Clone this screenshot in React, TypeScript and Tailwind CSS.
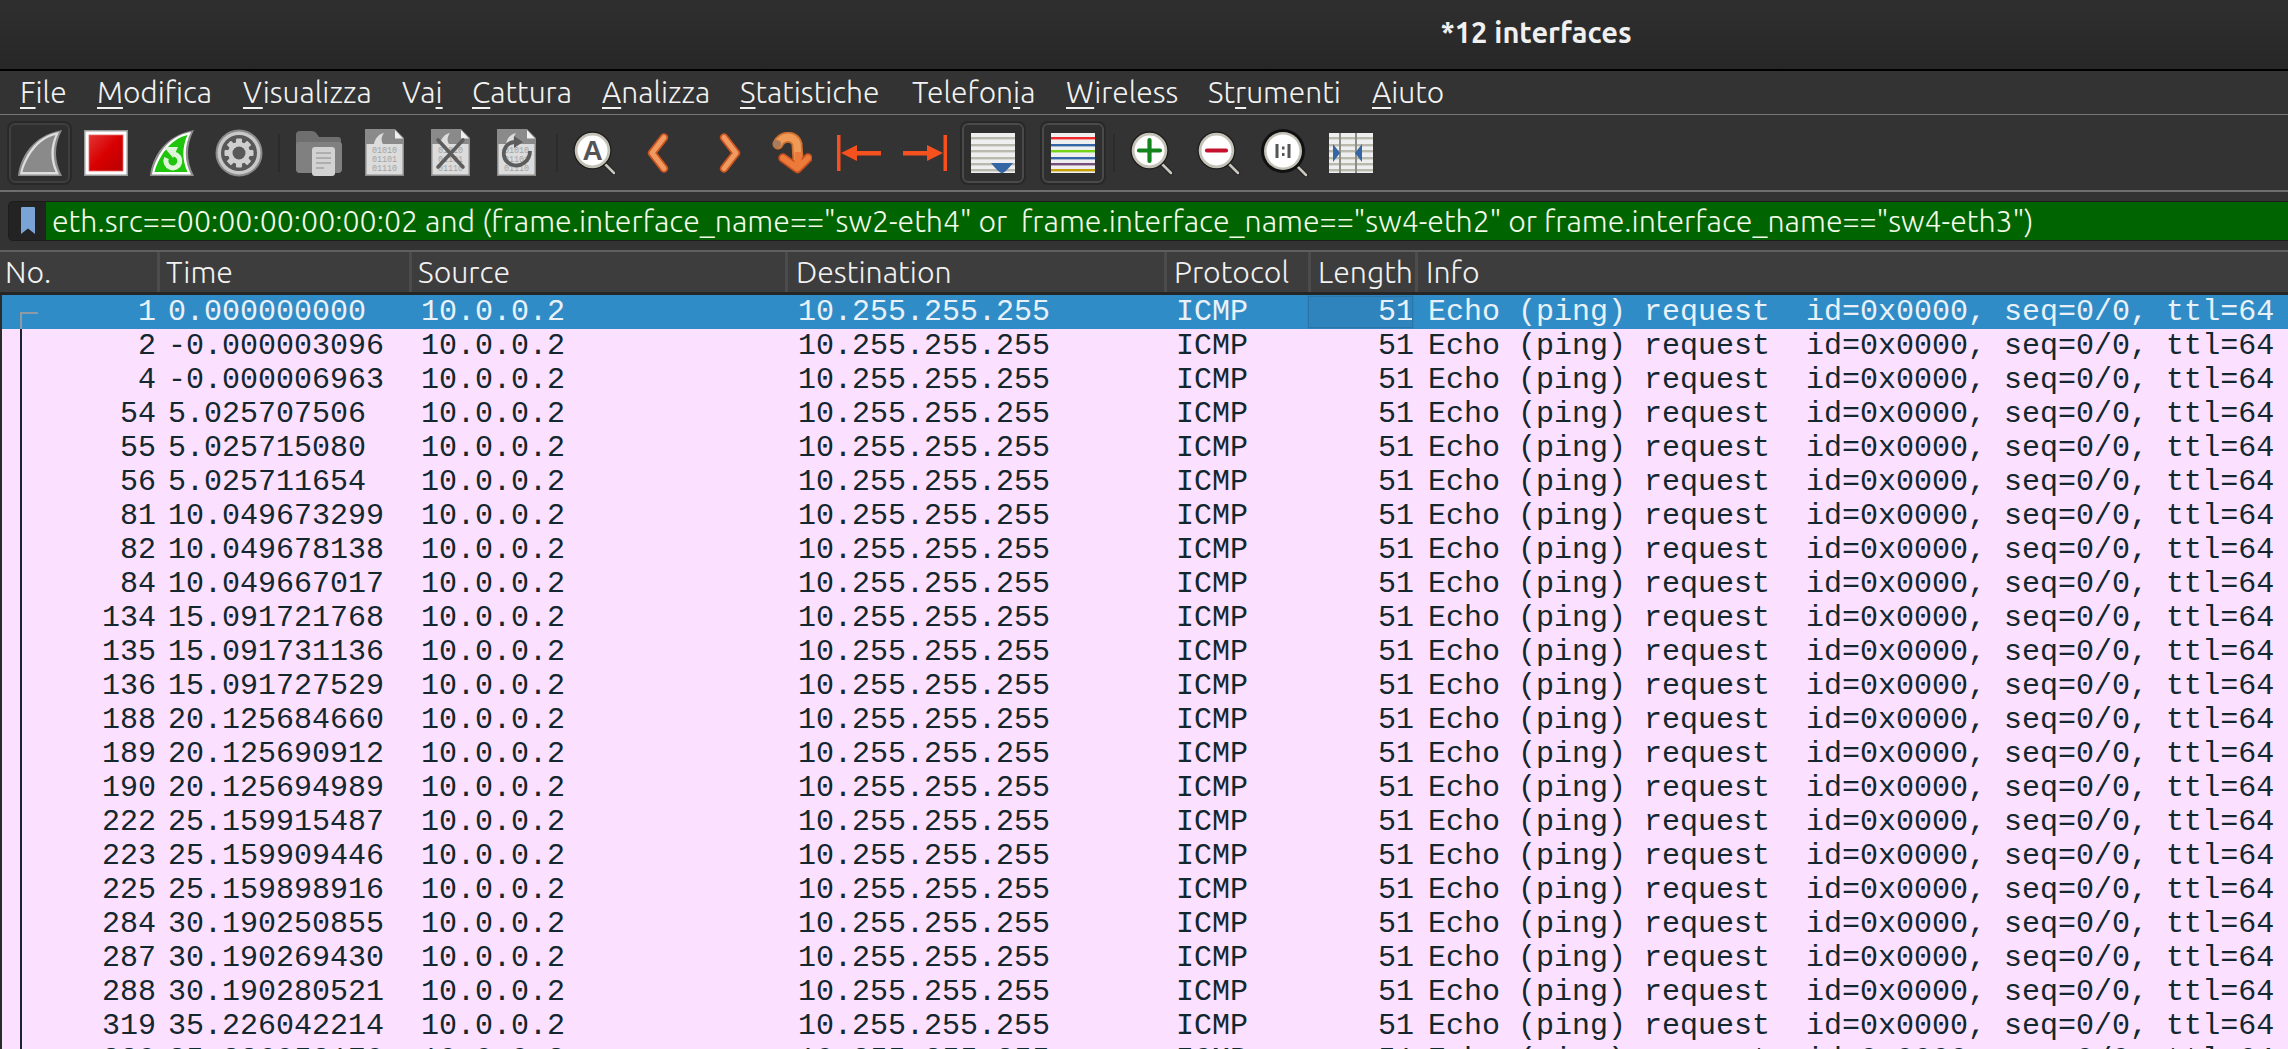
const uiFont = "font-['Ubuntu','Lato','Open_Sans',sans-serif]";

const menuItems = [
  { pre: '', key: 'F', post: 'ile', cls: 'w-[77px]' },
  { pre: '', key: 'M', post: 'odifica', cls: 'w-[146px]' },
  { pre: '', key: 'V', post: 'isualizza', cls: 'w-[159px]' },
  { pre: 'Va', key: 'i', post: '', cls: 'w-[70px]' },
  { pre: '', key: 'C', post: 'attura', cls: 'w-[130px]' },
  { pre: '', key: 'A', post: 'nalizza', cls: 'w-[138px]' },
  { pre: '', key: 'S', post: 'tatistiche', cls: 'w-[172px]' },
  { pre: 'Telefon', key: 'i', post: 'a', cls: 'w-[154px]' },
  { pre: '', key: 'W', post: 'ireless', cls: 'w-[142px]' },
  { pre: 'St', key: 'r', post: 'umenti', cls: 'w-[164px]' },
  { pre: '', key: 'A', post: 'iuto', cls: 'w-[80px]' },
];

const columns = [
  { label: 'No.', cls: 'w-[160px] pl-[5px]' },
  { label: 'Time', cls: 'w-[252px] pl-[6px]' },
  { label: 'Source', cls: 'w-[376px] pl-[6px]' },
  { label: 'Destination', cls: 'w-[379px] pl-[8px]' },
  { label: 'Protocol', cls: 'w-[144px] pl-[7px]' },
  { label: 'Length', cls: 'w-[107px] pl-[7px]' },
  { label: 'Info', cls: 'flex-1 pl-[8px]' },
];

const packets: [string, string][] = [
  ['1', '0.000000000'],
  ['2', '-0.000003096'],
  ['4', '-0.000006963'],
  ['54', '5.025707506'],
  ['55', '5.025715080'],
  ['56', '5.025711654'],
  ['81', '10.049673299'],
  ['82', '10.049678138'],
  ['84', '10.049667017'],
  ['134', '15.091721768'],
  ['135', '15.091731136'],
  ['136', '15.091727529'],
  ['188', '20.125684660'],
  ['189', '20.125690912'],
  ['190', '20.125694989'],
  ['222', '25.159915487'],
  ['223', '25.159909446'],
  ['225', '25.159898916'],
  ['284', '30.190250855'],
  ['287', '30.190269430'],
  ['288', '30.190280521'],
  ['319', '35.226042214'],
  ['320', '35.226052170'],
];

function Sep() {
  return <div className="h-[38px] w-[2px] shrink-0 bg-[#2b2b2b]" />;
}

function SharkIcon() {
  return (
    <svg viewBox="0 0 46 48" className="h-[48px] w-[46px]">
      <path d="M1 47 C3 28 16 6 45 1 C37 16 37 32 45 47 Z" fill="#8e8e8e" />
      <path d="M3 45.5 C6 29 18 7 42 3 C35 17 35 32 42 45.5 Z" fill="#dedede" />
      <path d="M5.5 43 C9 30 20 10 38.5 6 C33 18 33 31 38.5 43 Z" fill="#8a8a8a" />
    </svg>
  );
}

function StopIcon() {
  return (
    <svg viewBox="0 0 44 46" className="h-[46px] w-[44px]">
      <defs>
        <linearGradient id="stopg" x1="0" y1="0" x2="1" y2="1">
          <stop offset="0" stopColor="#e23434" />
          <stop offset="0.5" stopColor="#d80000" />
          <stop offset="1" stopColor="#b80000" />
        </linearGradient>
      </defs>
      <rect width="44" height="46" fill="#9a9a9a" />
      <rect x="1.5" y="1.5" width="41" height="43" fill="#ffffff" />
      <rect x="5" y="5" width="34" height="36" fill="url(#stopg)" stroke="#e56a6a" strokeWidth="0.8" />
    </svg>
  );
}

function RestartIcon() {
  return (
    <svg viewBox="0 0 46 48" className="h-[48px] w-[46px]">
      <path d="M1 47 C3 28 16 6 45 1 C37 16 37 32 45 47 Z" fill="#8e8e8e" />
      <path d="M3 45.5 C6 29 18 7 42 3 C35 17 35 32 42 45.5 Z" fill="#ffffff" />
      <path d="M5.5 43 C9 30 20 10 38.5 6 C33 18 33 31 38.5 43 Z" fill="#1fc50c" />
      <path d="M17.5 29 A7 7 0 1 0 25 25" fill="none" stroke="#dff5da" strokeWidth="5" />
      <path d="M15 18 L29 18 L24 29 Z" fill="#dff5da" />
    </svg>
  );
}

function GearIcon() {
  const teeth = [0, 45, 90, 135, 180, 225, 270, 315];
  return (
    <svg viewBox="0 0 48 48" className="h-[48px] w-[48px]">
      <circle cx="24" cy="24" r="23.5" fill="#8a8a8a" />
      <circle cx="24" cy="24" r="21.5" fill="#c8c8c8" />
      <circle cx="24" cy="24" r="18" fill="#585858" />
      {teeth.map((a) => (
        <rect key={a} x="21" y="9.5" width="6" height="7" rx="1" fill="#cfcfcf" transform={`rotate(${a} 24 24)`} />
      ))}
      <circle cx="24" cy="24" r="11" fill="#cfcfcf" />
      <circle cx="24" cy="24" r="6.5" fill="#585858" />
    </svg>
  );
}

function FolderIcon() {
  return (
    <svg viewBox="0 0 46 46" className="h-[46px] w-[46px]">
      <path d="M0 5 Q0 1 4 1 H16 Q19 1 21 4 L23 7 H42 Q45 7 45 10 V38 Q45 43 40 43 H5 Q0 43 0 38 Z" fill="#6f6f6f" />
      <path d="M0 15 Q0 12 3 12 H43 Q46 12 46 15 V39 Q46 43 42 43 H4 Q0 43 0 39 Z" fill="#808080" />
      <rect x="16" y="17" width="23" height="29" rx="3" fill="#d2d2d2" />
      <path d="M20 23 H35 M20 28 H35 M20 33 H35 M20 38 H28" stroke="#a2a2a2" strokeWidth="1.6" />
    </svg>
  );
}

function FileBase() {
  return (
    <>
      <path d="M0 0 H30 L39 9 V47 H0 Z" fill="#8a8a8a" />
      <path d="M1.5 15 H37.5 V45.5 H1.5 Z" fill="#dcdcdc" />
      <path d="M30 1 L38 9.5 H30 Z" fill="#f0f0f0" />
      <path d="M9 15 C10 9 14 5 19 4 C16 8 16 12 18 15 Z" fill="#dcdcdc" />
      <g fill="#a4a4a4" fontFamily="'Liberation Mono', monospace" fontSize="8.4">
        <text x="7" y="24">01010</text>
        <text x="7" y="33">01101</text>
        <text x="7" y="42">01110</text>
      </g>
    </>
  );
}

function FileIcon() {
  return (
    <svg viewBox="0 0 39 47" className="h-[47px] w-[39px]">
      <FileBase />
    </svg>
  );
}

function CloseFileIcon() {
  return (
    <svg viewBox="0 0 39 47" className="h-[47px] w-[39px]">
      <FileBase />
      <path d="M7 11 L32 38 M32 11 L7 38" stroke="#5c5c5c" strokeWidth="3.6" strokeLinecap="round" />
    </svg>
  );
}

function ReloadFileIcon() {
  return (
    <svg viewBox="0 0 39 47" className="h-[47px] w-[39px]">
      <FileBase />
      <path d="M17 13 C9 14 6 21 7 27 C9 36 20 39 27 34 C31 31 33 27 33 22" fill="none" stroke="#5c5c5c" strokeWidth="3.8" />
      <path d="M17 7 L26 13 L17 19 Z" fill="#5c5c5c" />
    </svg>
  );
}

function Lens({ children }: { children: React.ReactNode }) {
  return (
    <svg viewBox="0 0 44 44" className="h-[44px] w-[44px]">
      <path d="M30 31 L41 42" stroke="#1c1c1c" strokeWidth="4.5" strokeLinecap="round" />
      <path d="M30 31 L41 42" stroke="#c9c7bc" strokeWidth="2.6" strokeLinecap="round" />
      <circle cx="19.5" cy="19.5" r="19" fill="#1a1a1a" />
      <circle cx="19.5" cy="19.5" r="17.8" fill="#c4c2b6" />
      <circle cx="19.5" cy="19.5" r="15" fill="#ffffff" />
      {children}
    </svg>
  );
}

function FindIcon() {
  return (
    <Lens>
      <text x="19.5" y="29" textAnchor="middle" fontFamily="'Liberation Sans', sans-serif" fontWeight="700" fontSize="28" fill="#555555">
        A
      </text>
    </Lens>
  );
}

function ZoomInIcon() {
  return (
    <Lens>
      <path d="M19.5 9 V30 M9 19.5 H30" stroke="#13841e" strokeWidth="4.2" strokeLinecap="round" />
    </Lens>
  );
}

function ZoomOutIcon() {
  return (
    <Lens>
      <path d="M10 19.5 H29" stroke="#c4122e" strokeWidth="4.2" strokeLinecap="round" />
    </Lens>
  );
}

function ZoomResetIcon() {
  return (
    <svg viewBox="0 0 48 48" className="h-[48px] w-[48px]">
      <path d="M33 34 L45 46" stroke="#1c1c1c" strokeWidth="4.5" strokeLinecap="round" />
      <path d="M33 34 L45 46" stroke="#c9c7bc" strokeWidth="2.6" strokeLinecap="round" />
      <circle cx="22" cy="22" r="22" fill="#111111" />
      <circle cx="22" cy="22" r="19" fill="#c4c2b6" />
      <circle cx="22" cy="22" r="16.5" fill="#ffffff" />
      <path d="M14.5 15 H17.5 V29 H14.5 Z M26.5 15 H29.5 V29 H26.5 Z M21 17.5 H23.5 V20.5 H21 Z M21 24 H23.5 V27 H21 Z" fill="#555555" />
    </svg>
  );
}

function BackIcon() {
  return (
    <svg viewBox="0 0 22 40" className="h-[40px] w-[22px]">
      <path d="M17 4.5 L5 20 L17 35.5" fill="none" stroke="#cc5420" strokeWidth="8.5" strokeLinecap="round" strokeLinejoin="round" />
      <path d="M17 4.5 L5 20 L17 35.5" fill="none" stroke="#f09a60" strokeWidth="5" strokeLinecap="round" strokeLinejoin="round" />
    </svg>
  );
}

function ForwardIcon() {
  return (
    <svg viewBox="0 0 22 40" className="h-[40px] w-[22px]">
      <path d="M5 4.5 L17 20 L5 35.5" fill="none" stroke="#cc5420" strokeWidth="8.5" strokeLinecap="round" strokeLinejoin="round" />
      <path d="M5 4.5 L17 20 L5 35.5" fill="none" stroke="#f09a60" strokeWidth="5" strokeLinecap="round" strokeLinejoin="round" />
    </svg>
  );
}

function JumpIcon() {
  return (
    <svg viewBox="0 0 40 42" className="h-[42px] w-[40px]">
      <path d="M6 12 C9 4 22 2 25 12 L26 28" fill="none" stroke="#d0702e" strokeWidth="11" strokeLinecap="round" />
      <path d="M6 12 C9 4 22 2 25 12 L26 28" fill="none" stroke="#f09a58" strokeWidth="7.5" strokeLinecap="round" />
      <circle cx="5" cy="12" r="4" fill="#a87c5c" />
      <path d="M11 26 L25.5 36.5 L36 26" fill="none" stroke="#c9501c" strokeWidth="9.5" strokeLinecap="round" strokeLinejoin="round" />
      <path d="M11 26 L25.5 36.5 L36 26" fill="none" stroke="#ec7a3a" strokeWidth="6" strokeLinecap="round" strokeLinejoin="round" />
      <path d="M26 20 L26 33" stroke="#ec7a3a" strokeWidth="7" />
    </svg>
  );
}

function FirstIcon() {
  return (
    <svg viewBox="0 0 44 36" className="h-[36px] w-[44px]">
      <rect x="0" y="0" width="3.5" height="36" fill="#f4511e" />
      <path d="M4 18 L20 10 V26 Z" fill="#f4511e" />
      <rect x="18" y="16" width="26" height="4.5" fill="#f4511e" />
    </svg>
  );
}

function LastIcon() {
  return (
    <svg viewBox="0 0 44 36" className="h-[36px] w-[44px]">
      <rect x="40.5" y="0" width="3.5" height="36" fill="#f4511e" />
      <path d="M40 18 L24 10 V26 Z" fill="#f4511e" />
      <rect x="0" y="16" width="26" height="4.5" fill="#f4511e" />
    </svg>
  );
}

function AutoScrollIcon() {
  return (
    <svg viewBox="0 0 44 40" className="h-[40px] w-[44px]">
      <rect width="44" height="40" fill="#efefef" />
      {[4, 11, 17, 24, 30, 36].map((y) => (
        <rect key={y} y={y} width="44" height="2.4" fill="#b9b9ae" />
      ))}
      <path d="M20 30 H42 Q34 40 31 40 Q28 40 20 30 Z" fill="#3465a4" />
    </svg>
  );
}

function ColorizeIcon() {
  return (
    <svg viewBox="0 0 44 40" className="h-[40px] w-[44px]">
      <rect width="44" height="40" fill="#efefef" />
      <rect y="4" width="44" height="2.4" fill="#ef2929" />
      <rect y="11" width="44" height="2.4" fill="#3465a4" />
      <rect y="17" width="44" height="2.4" fill="#73d216" />
      <rect y="24" width="44" height="2.4" fill="#3465a4" />
      <rect y="30" width="44" height="2.4" fill="#75507b" />
      <rect y="36" width="44" height="2.4" fill="#c4a000" />
    </svg>
  );
}

function ResizeColsIcon() {
  return (
    <svg viewBox="0 0 44 40" className="h-[40px] w-[44px]">
      <rect width="44" height="40" fill="#efefef" />
      {[4, 11, 17, 24, 30, 36].map((y) => (
        <rect key={y} y={y} width="44" height="2.4" fill="#b9b9ae" />
      ))}
      <rect x="10" width="2" height="40" fill="#8d8d85" />
      <rect x="26" width="2" height="40" fill="#8d8d85" />
      <path d="M4 5 L11 14 L4 23 Z" fill="#3465a4" transform="translate(0 6)" />
      <path d="M33 5 L26 14 L33 23 Z" fill="#3465a4" transform="translate(0 6)" />
    </svg>
  );
}

export default function App() {
  return (
    <div className={`flex h-[1049px] w-[2288px] flex-col overflow-hidden bg-[#333333] text-[#f2f2f2] ${uiFont}`}>
      {/* titulo */}
      <div className="flex h-[69px] shrink-0 items-center bg-gradient-to-b from-[#2f2f2f] to-[#272727] pb-[4px]">
        <div className="ml-[1400px] w-[272px] text-center text-[29px] font-bold text-[#f0f0f0]">*12 interfaces</div>
      </div>
      <div className="h-[2px] shrink-0 bg-black" />

      {/* menu */}
      <div className="flex h-[44px] shrink-0 items-center border-b-[1px] border-[#777777] pb-[2px] pl-[20px] text-[30px] font-light leading-[34px]">
        {menuItems.map((m) => (
          <div key={m.pre + m.key + m.post} className={`shrink-0 whitespace-pre ${m.cls}`}>
            {m.pre}
            <span className="underline decoration-2 underline-offset-[4px]">{m.key}</span>
            {m.post}
          </div>
        ))}
      </div>

      {/* toolbar */}
      <div className="flex h-[77px] shrink-0 items-center border-b-[2px] border-[#6e6e6e] pl-[9px]">
        <div className="flex h-[60px] w-[61px] shrink-0 items-center justify-center rounded-[6px] border-[2px] border-[#3f3f3f] bg-[#2f2f2f] outline outline-[2px] outline-[#292929]">
          <SharkIcon />
        </div>
        <div className="ml-[14px] flex"><StopIcon /></div>
        <div className="ml-[21px] flex"><RestartIcon /></div>
        <div className="ml-[20px] flex"><GearIcon /></div>
        <div className="ml-[15px]"><Sep /></div>
        <div className="ml-[16px] flex"><FolderIcon /></div>
        <div className="ml-[23px] flex"><FileIcon /></div>
        <div className="ml-[27px] flex"><CloseFileIcon /></div>
        <div className="ml-[27px] flex"><ReloadFileIcon /></div>
        <div className="ml-[20px]"><Sep /></div>
        <div className="ml-[15px] flex"><FindIcon /></div>
        <div className="ml-[30px] flex"><BackIcon /></div>
        <div className="ml-[50px] flex"><ForwardIcon /></div>
        <div className="ml-[31px] flex"><JumpIcon /></div>
        <div className="ml-[25px] flex"><FirstIcon /></div>
        <div className="ml-[22px] flex"><LastIcon /></div>
        <div className="ml-[15px] flex h-[60px] w-[62px] shrink-0 items-center justify-center rounded-[6px] border-[2px] border-[#4a4a4a] bg-[#2f2f2f] outline outline-[2px] outline-[#292929]">
          <AutoScrollIcon />
        </div>
        <div className="ml-[18px] flex h-[60px] w-[62px] shrink-0 items-center justify-center rounded-[6px] border-[2px] border-[#4a4a4a] bg-[#2f2f2f] outline outline-[2px] outline-[#292929]">
          <ColorizeIcon />
        </div>
        <div className="ml-[9px]"><Sep /></div>
        <div className="ml-[15px] flex"><ZoomInIcon /></div>
        <div className="ml-[23px] flex"><ZoomOutIcon /></div>
        <div className="ml-[20px] flex"><ZoomResetIcon /></div>
        <div className="ml-[20px] flex"><ResizeColsIcon /></div>
      </div>

      {/* filtro */}
      <div className="flex h-[60px] shrink-0 flex-col border-b-[2px] border-[#5f5f5f] pt-[9px] pl-[8px]">
        <div className="flex h-[40px] items-stretch overflow-hidden rounded-l-[5px] border-y-[1px] border-l-[1px] border-[#1c1c1c]">
          <div className="flex w-[37px] shrink-0 items-center justify-center bg-[#232323]">
            <svg viewBox="0 0 16 28" className="h-[28px] w-[16px]">
              <path d="M1 1 Q1 0 2 0 H14 Q15 0 15 1 V27 L8 21.5 L1 27 Z" fill="#7aa3d6" />
            </svg>
          </div>
          <div className="flex flex-1 items-center bg-[#006400] pt-[2px] pl-[6px] text-[30.3px] font-light whitespace-pre text-[#f2fbe8]">
            {'eth.src==00:00:00:00:00:02 and (frame.interface_name=="sw2-eth4" or  frame.interface_name=="sw4-eth2" or frame.interface_name=="sw4-eth3")'}
          </div>
        </div>
      </div>

      {/* cabecalho */}
      <div className="flex h-[40px] shrink-0 items-center bg-[#3d3d3d] text-[30.3px] font-light">
        {columns.map((c, i) => (
          <div key={c.label} className={`flex h-full shrink-0 items-center pt-[2px] ${c.cls} ${i < columns.length - 1 ? 'border-r-[3px] border-[#4c4c4c]' : ''}`}>
            {c.label}
          </div>
        ))}
      </div>
      <div className="h-[3px] shrink-0 bg-[#252525]" />

      {/* pacotes */}
      <div className="relative flex-1 overflow-hidden border-l-[2px] border-[#2b2b2b] bg-[#fce0ff] font-['Liberation_Mono',monospace] text-[30px] leading-[34px] text-[#12272e]">
        {packets.map(([no, time], i) => (
          <div key={no} className={`flex h-[34px] whitespace-pre ${i === 0 ? 'bg-[#308cc6] text-[#e8f1f8]' : ''}`}>
            <div className="w-[154px] shrink-0 text-right">{no}</div>
            <div className="w-[251px] shrink-0 pl-[12px]">{time}</div>
            <div className="w-[376px] shrink-0 pl-[14px]">10.0.0.2</div>
            <div className="w-[380px] shrink-0 pl-[15px]">10.255.255.255</div>
            <div className="w-[144px] shrink-0 pl-[13px]">ICMP</div>
            <div className={`w-[107px] shrink-0 text-right ${i === 0 ? 'bg-[#2f84bd] outline outline-[1px] -outline-offset-[2px] outline-[#2a76aa]' : ''}`}>51</div>
            <div className="flex-1 pl-[14px]">Echo (ping) request  id=0x0000, seq=0/0, ttl=64</div>
          </div>
        ))}
        {/* linha de pacotes relacionados */}
        <div className="absolute top-[17px] left-[18px] h-[2px] w-[18px] bg-[#8f9aa3]" />
        <div className="absolute top-[17px] left-[18px] h-[17px] w-[2px] bg-[#8f9aa3]" />
        <div className="absolute top-[34px] bottom-0 left-[18px] w-[2px] bg-[#1b2430]" />
      </div>
    </div>
  );
}
